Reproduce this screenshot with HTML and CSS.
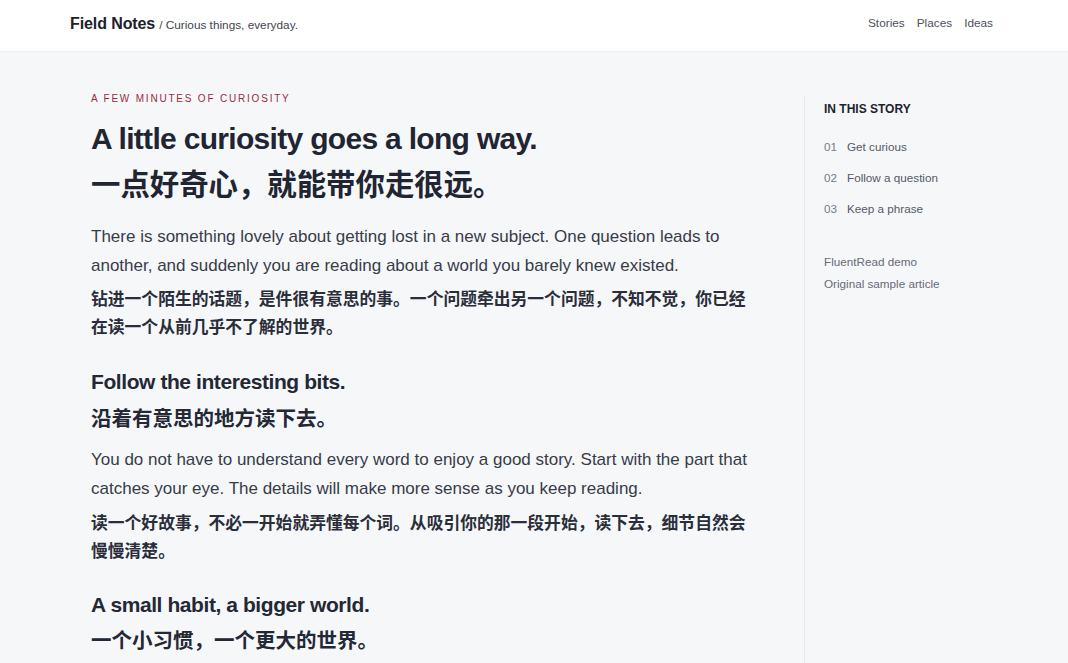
FILE: index.html
```html
<!DOCTYPE html>
<html lang="en">
<head>
<meta charset="utf-8">
<title>Field Notes — A little curiosity goes a long way.</title>
<link rel="stylesheet" href="styles.css">
</head>
<body>
<header class="site-header">
  <div class="header-inner">
    <div class="brand">
      <span class="brand-name">Field Notes</span>
      <span class="brand-tag">/ Curious things, everyday.</span>
    </div>
    <nav class="nav">
      <a class="nav-link" href="#">Stories</a>
      <a class="nav-link" href="#">Places</a>
      <a class="nav-link" href="#">Ideas</a>
    </nav>
  </div>
</header>

<main class="layout">
  <article class="article">
    <p class="eyebrow">A FEW MINUTES OF CURIOSITY</p>
    <h1 class="title">
      <span class="title-en">A little curiosity goes a long way.</span>
      <span class="title-zh">一点好奇心，就能带你走很远。</span>
    </h1>

    <p class="para-en first">There is something lovely about getting lost in a new subject. One question leads to another, and suddenly you are reading about a world you barely knew existed.</p>
    <p class="para-zh first">钻进一个陌生的话题，是件很有意思的事。一个问题牵出另一个问题，不知不觉，你已经在读一个从前几乎不了解的世界。</p>

    <h2 class="sub first">
      <span class="sub-en">Follow the interesting bits.</span>
      <span class="sub-zh">沿着有意思的地方读下去。</span>
    </h2>
    <p class="para-en">You do not have to understand every word to enjoy a good story. Start with the part that catches your eye. The details will make more sense as you keep reading.</p>
    <p class="para-zh">读一个好故事，不必一开始就弄懂每个词。从吸引你的那一段开始，读下去，细节自然会慢慢清楚。</p>

    <h2 class="sub">
      <span class="sub-en">A small habit, a bigger world.</span>
      <span class="sub-zh">一个小习惯，一个更大的世界。</span>
    </h2>
  </article>

  <aside class="sidebar">
    <h3 class="toc-title">IN THIS STORY</h3>
    <ol class="toc">
      <li class="toc-item"><span class="toc-num">01</span><span class="toc-text">Get curious</span></li>
      <li class="toc-item"><span class="toc-num">02</span><span class="toc-text">Follow a question</span></li>
      <li class="toc-item"><span class="toc-num">03</span><span class="toc-text">Keep a phrase</span></li>
    </ol>
    <div class="meta">
      <a class="meta-link" href="#">FluentRead demo</a>
      <a class="meta-link" href="#">Original sample article</a>
    </div>
  </aside>
</main>
</body>
</html>
```

FILE: styles.css
```css
* {
  box-sizing: border-box;
}

html, body {
  margin: 0;
  padding: 0;
}

body {
  background: #f6f7f9;
  font-family: "Liberation Sans", Arial, "Noto Sans CJK SC", sans-serif;
  color: #222633;
  overflow: hidden;
  min-height: 663px;
}

a {
  text-decoration: none;
  color: inherit;
}

/* Header */
.site-header {
  background: #ffffff;
  border-bottom: 1px solid #eef0f3;
}

.header-inner {
  width: 928px;
  margin: 0 auto;
  height: 51px;
  padding-bottom: 3px;
  display: flex;
  align-items: center;
  justify-content: space-between;
}

.brand {
  display: flex;
  align-items: baseline;
  gap: 4px;
}

.brand-name {
  font-size: 16px;
  font-weight: 700;
  color: #1d212c;
  letter-spacing: -0.1px;
}

.brand-tag {
  font-size: 11.8px;
  color: #3f4451;
}

.nav {
  display: flex;
  gap: 12px;
  padding-right: 5px;
  margin-top: -2px;
}

.nav-link {
  font-size: 11.8px;
  color: #4b505c;
}

/* Layout */
.layout {
  width: 928px;
  margin: 0 auto;
  display: grid;
  grid-template-columns: 1fr 194px;
  min-height: 611px;
}

.article {
  padding: 40px 0 0 21px;
  max-width: 689px;
}

.eyebrow {
  margin: 0;
  font-size: 10px;
  line-height: 14px;
  letter-spacing: 1.8px;
  color: #9d2a40;
}

.title {
  margin: 15px 0 0;
  font-weight: 700;
  color: #212532;
}

.title-en {
  display: block;
  font-size: 30px;
  line-height: 36px;
  letter-spacing: -0.023em;
}

.title-zh {
  display: block;
  margin-top: 5px;
  font-family: "Noto Sans CJK SC", sans-serif;
  font-size: 29.4px;
  line-height: 40px;
}

.para-en {
  margin: 13px 0 0;
  font-size: 17px;
  line-height: 29px;
  color: #373c49;
}

.para-en.first {
  margin-top: 20px;
}

.para-zh {
  margin: 5px 0 0;
  font-family: "Noto Sans CJK SC", sans-serif;
  font-size: 16.8px;
  line-height: 28px;
  font-weight: 600;
  color: #2a2e3a;
}

.para-zh.first {
  margin-top: 4px;
}

.sub {
  margin: 27px 0 0;
  font-weight: 700;
  color: #242835;
}

.sub.first {
  margin-top: 28px;
}

.sub-en {
  display: block;
  font-size: 21px;
  line-height: 28px;
  letter-spacing: -0.02em;
}

.sub-zh {
  display: block;
  margin-top: 5px;
  font-family: "Noto Sans CJK SC", sans-serif;
  font-size: 20.5px;
  line-height: 30px;
}

.sub.first .sub-zh {
  margin-top: 6px;
}

/* Sidebar */
.sidebar {
  margin-top: 44px;
  border-left: 1px solid #e7e9ed;
  padding: 5px 0 0 19px;
}

.toc-title {
  margin: 0;
  font-size: 12px;
  line-height: 16px;
  font-weight: 700;
  color: #1e2230;
}

.toc {
  list-style: none;
  margin: 22px 0 0;
  padding: 0;
  display: flex;
  flex-direction: column;
  gap: 15px;
}

.toc-item {
  display: flex;
  gap: 10px;
  font-size: 11.7px;
  line-height: 16px;
}

.toc-num {
  color: #777c88;
}

.toc-text {
  color: #555a66;
}

.meta {
  margin-top: 37px;
  display: flex;
  flex-direction: column;
  gap: 6px;
}

.meta-link {
  font-size: 11.7px;
  line-height: 16px;
  color: #666b77;
}
```
